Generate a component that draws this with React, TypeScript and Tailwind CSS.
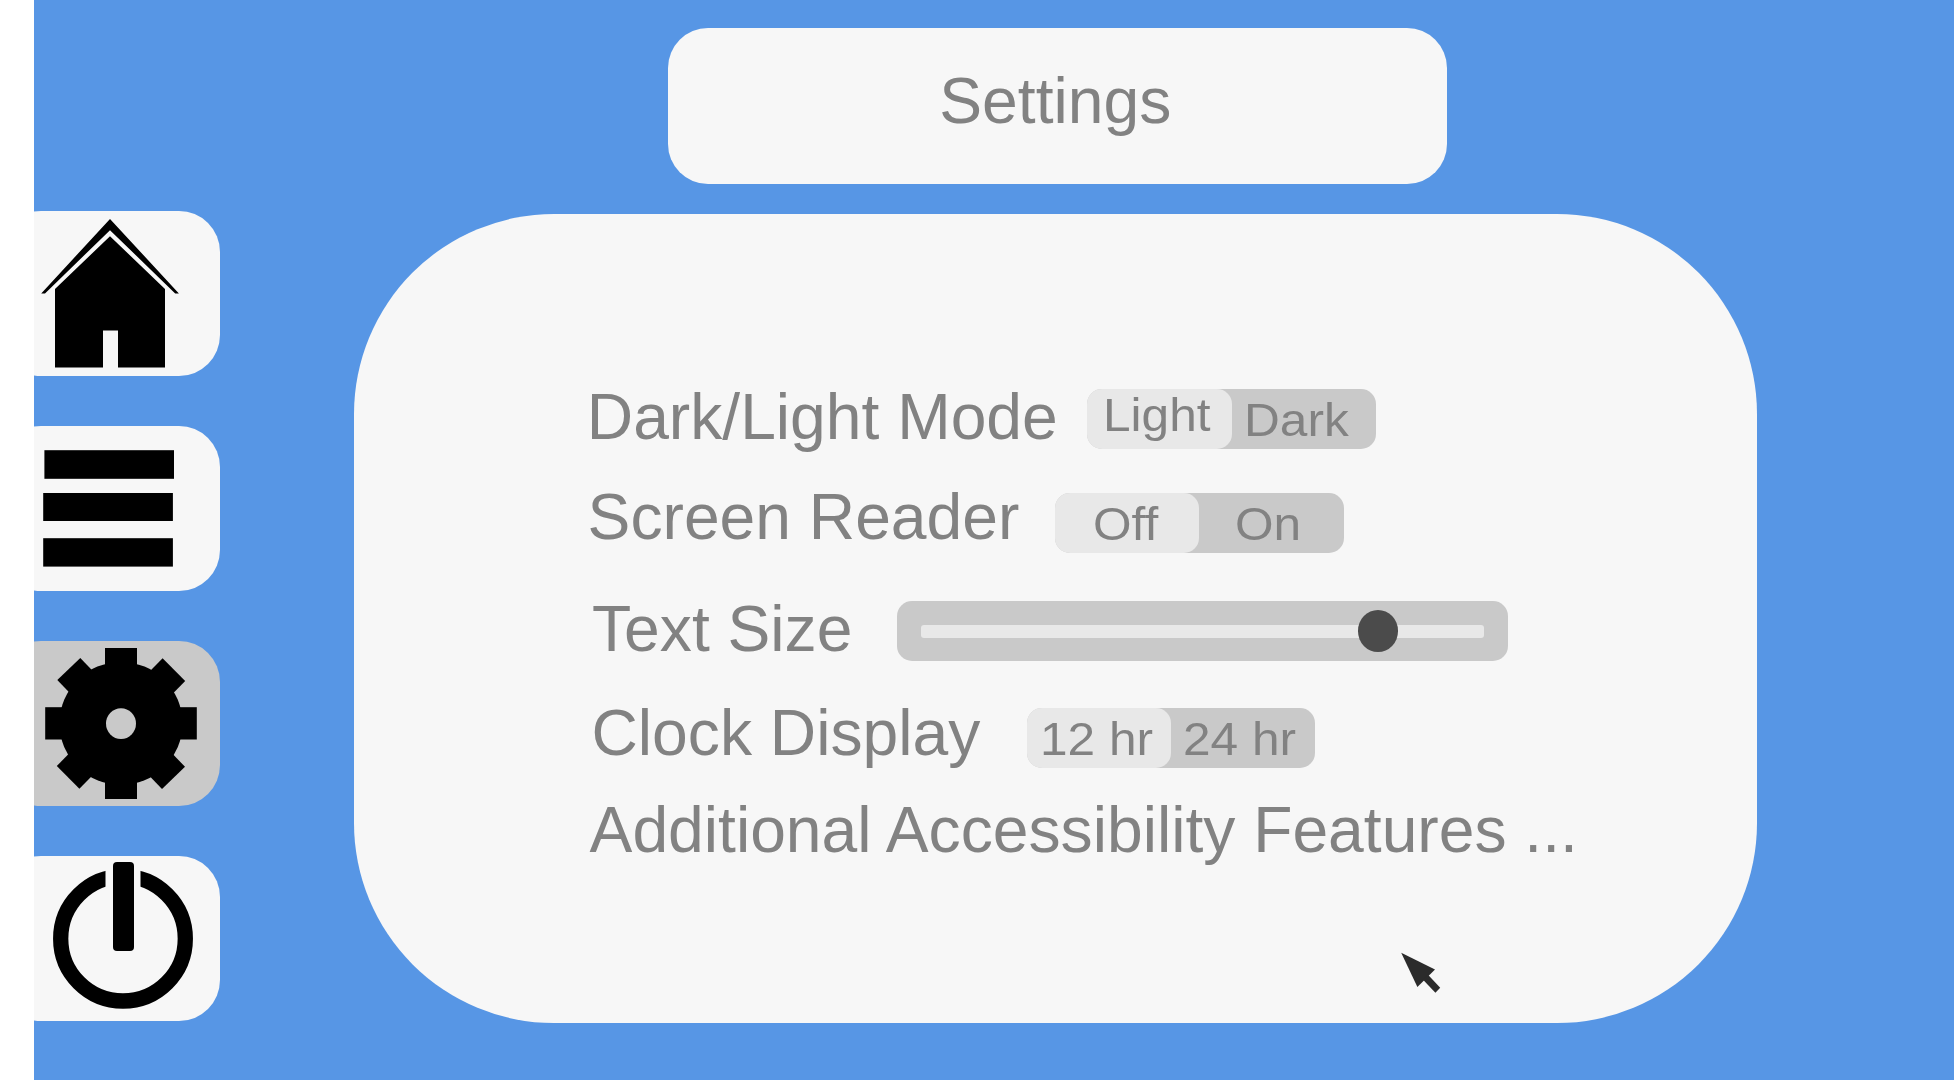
import type { ReactNode } from "react";

function NavCard({ active = false, top, label, children }: { active?: boolean; top: number; label: string; children: ReactNode }) {
  return (
    <button
      aria-label={label}
      className={`-ml-[34px] block h-[165px] w-[220px] shrink-0 rounded-[41px] ${active ? "bg-[#c9c9c9]" : "bg-[#f7f7f7]"}`}
    >
      <svg width="220" height="165" viewBox={`0 ${top} 220 165`} className="block">
        {children}
      </svg>
    </button>
  );
}

function Toggle({ left, right, leftClass, rightClass }: { left: string; right: string; leftClass: string; rightClass: string }) {
  return (
    <div className="flex h-[60.3px] w-[288.6px] shrink-0 rounded-[15px] bg-[#c9c9c9] text-[47px] leading-[61px]">
      <div className="h-full w-[144.5px] rounded-[15px] bg-[#e8e8e8]">
        <span className={`block origin-left scale-x-[1.055] whitespace-nowrap ${leftClass}`}>{left}</span>
      </div>
      <div className="h-full w-[144px]">
        <span className={`block origin-left scale-x-[1.055] whitespace-nowrap ${rightClass}`}>{right}</span>
      </div>
    </div>
  );
}

export default function App() {
  return (
    <div className="relative flex h-[1080px] w-[1954px] overflow-hidden bg-white pl-[34px] font-['Liberation_Sans',Arial,sans-serif] text-[64.2px] leading-[60px] text-[#828282]">
      <div className="flex flex-1 bg-[#5796e5]">
        <nav className="flex w-[320px] shrink-0 flex-col gap-[50px] overflow-hidden pt-[211px]">
          <NavCard label="Home" top={211}>
            <path d="M110 219 178.9 293.4H175.2L110 230.2 45 293.4H41.2Z" />
            <path d="M110 236.2 165 289V367.6H118V330.4H103V367.6H55V289Z" />
          </NavCard>
          <NavCard label="Menu" top={426}>
            <rect x="44.4" y="450.2" width="129.6" height="28.6" />
            <rect x="43.2" y="493" width="129.7" height="28" />
            <rect x="43.2" y="538.2" width="129.7" height="28.4" />
          </NavCard>
          <NavCard label="Settings" top={641} active>
            <circle cx="121" cy="723.4" r="61.5" />
            <rect x="105" y="648" width="32" height="151" />
            <rect x="45.2" y="707.2" width="151.6" height="32.3" />
            <path d="M80.3 658 185 766.8 162 789 57.3 680Z" />
            <path d="M162.6 658.3 185.2 681 79.4 788.7 56.8 766Z" />
            <ellipse cx="121" cy="723.6" rx="15" ry="15.4" fill="#c9c9c9" />
          </NavCard>
          <NavCard label="Power" top={856}>
            <circle cx="123" cy="938.7" r="62.3" fill="none" stroke="#000" strokeWidth="15.3" />
            <rect x="105.5" y="862" width="35" height="40" fill="#f7f7f7" />
            <rect x="113" y="862" width="21" height="89" rx="4" />
          </NavCard>
        </nav>

        <main className="flex flex-1 flex-col">
          <header className="mt-7 ml-[313.5px] h-[156px] w-[779px] rounded-[40px] bg-[#f7f7f7] pt-[42.6px] pl-[271.8px]">
            <h1 className="whitespace-nowrap">Settings</h1>
          </header>

          <section className="mt-[30px] h-[809px] w-[1403px] rounded-[200px] bg-[#f7f7f7] pt-[175px]">
            <div className="flex h-[104px] pl-[232.8px]">
              <div className="-mt-[2px] w-[500.5px] shrink-0 whitespace-nowrap">Dark/Light Mode</div>
              <Toggle left="Light" right="Dark" leftClass="-mt-[5px] ml-[16.2px]" rightClass="ml-[12px]" />
            </div>
            <div className="flex h-[108px] pl-[233.6px]">
              <div className="-mt-[6px] w-[467.4px] shrink-0 whitespace-nowrap">Screen Reader</div>
              <Toggle left="Off" right="On" leftClass="ml-[38px]" rightClass="ml-[36px]" />
            </div>
            <div className="flex h-[107px] pl-[238px]">
              <div className="-mt-[2px] w-[305px] shrink-0 whitespace-nowrap">Text Size</div>
              <div className="flex h-[60.3px] w-[610.8px] shrink-0 rounded-[15px] bg-[#c9c9c9] px-6 pt-[23.7px]">
                <div className="relative h-[13px] w-full rounded-[3px] bg-[#e8e8e8]">
                  <div className="absolute -top-[14.7px] left-[436.8px] h-[42px] w-[40.4px] rounded-[50%] bg-[#4b4b4b]" />
                </div>
              </div>
            </div>
            <div className="flex h-[96px] pl-[237.5px]">
              <div className="-mt-[5px] w-[435.2px] shrink-0 whitespace-nowrap">Clock Display</div>
              <Toggle left="12 hr" right="24 hr" leftClass="ml-[13px]" rightClass="ml-[12px]" />
            </div>
            <div className="-mt-[4px] pl-[235.6px] whitespace-nowrap">Additional Accessibility Features ...</div>
          </section>
        </main>
      </div>

      <svg className="absolute top-[950px] left-[1398px]" width="46" height="46" viewBox="1398 950 46 46" fill="#2b2b2b">
        <path d="M1401.2 952.8 1435 969.5 1417.4 987Z" />
        <path d="M1422.8 979.4 1428 974.8 1440.2 987.8 1435.4 992.8Z" />
      </svg>
    </div>
  );
}
